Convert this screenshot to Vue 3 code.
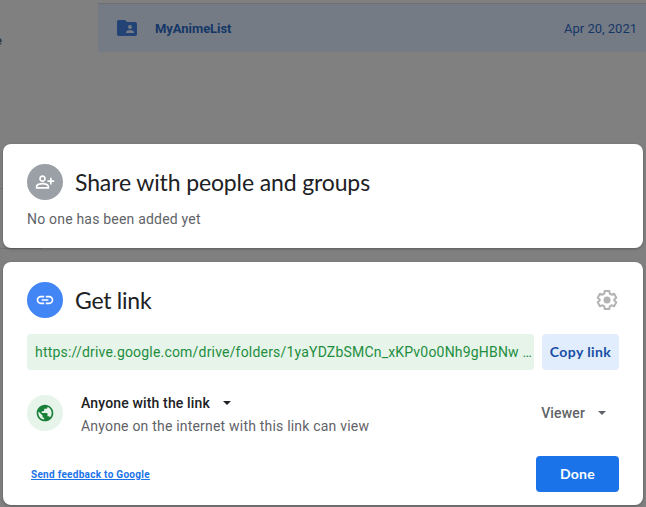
<script setup>
const file = { name: 'MyAnimeList', date: 'Apr 20, 2021' }
const url = 'https://drive.google.com/drive/folders/1yaYDZbSMCn_xKPv0o0Nh9gHBNw …'
</script>

<template>
  <div class="page">
    <header class="behind">
      <aside class="sidebar">e</aside>
      <div class="file-row">
        <svg class="folder" viewBox="0 0 20 16">
          <path fill="#234276" d="M2 0h6l2 2h8a2 2 0 0 1 2 2v10a2 2 0 0 1-2 2H2a2 2 0 0 1-2-2V2a2 2 0 0 1 2-2z" />
          <circle cx="13" cy="7" r="2" fill="#747b85" />
          <path fill="#747b85" d="M9 13v-1c0-1.400 2.600-2.100 4-2.100s4 .7 4 2.100v1z" />
        </svg>
        <span class="file-name">{{ file.name }}</span>
        <span class="file-date">{{ file.date }}</span>
      </div>
    </header>

    <main class="dialogs">
      <section class="card share">
        <div class="heading">
          <span class="disc grey">
            <svg width="20" height="20" viewBox="0 0 24 24" fill="#fff">
              <path d="M9 12c2.210 0 4-1.790 4-4s-1.790-4-4-4-4 1.790-4 4 1.790 4 4 4zm0-6c1.100 0 2 .9 2 2s-.9 2-2 2-2-.9-2-2 .9-2 2-2zm0 7c-2.670 0-8 1.340-8 4v3h16v-3c0-2.660-5.330-4-8-4zm6 5H3v-.99C3.200 16.290 6.300 15 9 15s5.800 1.290 6 2v1zM20 10V7h-2v3h-3v2h3v3h2v-3h3v-2z" />
            </svg>
          </span>
          <h2 class="title-share">Share with people and groups</h2>
        </div>
        <p class="none">No one has been added yet</p>
      </section>

      <section class="card link">
        <div class="heading">
          <span class="disc blue">
            <svg width="20" height="20" viewBox="0 0 24 24" fill="#fff">
              <path d="M3.900 12c0-1.710 1.390-3.100 3.100-3.100h4V7H7c-2.760 0-5 2.240-5 5s2.240 5 5 5h4v-1.900H7c-1.710 0-3.100-1.390-3.100-3.100zM8 13h8v-2H8v2zm9-6h-4v1.900h4c1.710 0 3.100 1.390 3.100 3.100s-1.390 3.100-3.100 3.100h-4V17h4c2.760 0 5-2.240 5-5s-2.240-5-5-5z" />
            </svg>
          </span>
          <h2 class="title-link">Get link</h2>
          <svg class="gear" width="24" height="24" viewBox="0 0 24 24">
            <path fill="none" stroke="#b3b3b3" stroke-width="2" stroke-linejoin="round" d="M9.700 3h4.600l.5 2.700 1.700 1 2.600-.9 2.200 3.900-2 1.700v1.200l2 1.700-2.200 3.900-2.600-.9-1.700 1-.5 2.700H9.700l-.5-2.700-1.700-1-2.600.9-2.200-3.900 2-1.700v-1.200l-2-1.700 2.200-3.900 2.600.9 1.700-1z" />
            <circle cx="12" cy="12" r="3.500" fill="#b3b3b3" />
          </svg>
        </div>

        <div class="link-row">
          <div class="url"><span>{{ url }}</span></div>
          <button class="copy">Copy link</button>
        </div>

        <div class="access">
          <span class="disc green">
            <svg width="20" height="20" viewBox="0 0 24 24" fill="#188038">
              <path d="M12 2C6.480 2 2 6.480 2 12s4.480 10 10 10 10-4.480 10-10S17.520 2 12 2zm-1 17.930c-3.950-.49-7-3.850-7-7.930 0-.62.080-1.210.21-1.790L9 15v1c0 1.100.9 2 2 2v1.930zm6.900-2.540c-.26-.81-1-1.390-1.900-1.390h-1v-3c0-.55-.45-1-1-1H8v-2h2c.55 0 1-.45 1-1V7h2c1.100 0 2-.9 2-2v-.41c2.930 1.190 5 4.060 5 7.410 0 2.080-.8 3.970-2.100 5.390z" />
            </svg>
          </span>
          <div class="audience">
            <div class="who"><span>Anyone with the link</span><i class="caret"></i></div>
            <div class="detail">Anyone on the internet with this link can view</div>
          </div>
          <div class="role"><span>Viewer</span><i class="caret"></i></div>
        </div>

        <footer class="actions">
          <a class="feedback">Send feedback to Google</a>
          <button class="done">Done</button>
        </footer>
      </section>
    </main>
  </div>
</template>

<style>
body {
  background: #808080;
  overflow: hidden;
}
</style>

<style scoped>
.page {
  box-sizing: border-box;
  width: 646px;
  height: 507px;
  overflow: hidden;
  background: linear-gradient(#717171, #717171) 0 188px / 4px 1px no-repeat,
    linear-gradient(#717171, #717171) 0 248px / 42px 1px no-repeat, #808080;
  font-family: Roboto, sans-serif;
  font-size: 14px;
  line-height: 20px;
}
.behind {
  display: flex;
  height: 144px;
}
.sidebar {
  width: 98px;
  padding-top: 31px;
  box-sizing: border-box;
  color: #303133;
  text-indent: -5px;
  font-size: 13px;
  font-weight: 500;
}
.file-row {
  display: flex;
  align-items: center;
  box-sizing: border-box;
  flex: 1;
  height: 49px;
  margin-top: 3px;
  padding: 1px 9px 0 19px;
  border-top: 1px solid #6d6e70;
  background: #747b85;
  color: #153767;
  font-size: 13px;
}
.folder {
  width: 20px;
  height: 16px;
  margin-bottom: 1px;
}
.file-name {
  margin-left: 18px;
  font-weight: 700;
  letter-spacing: -0.05px;
}
.file-date {
  margin-left: auto;
}
.dialogs {
  display: flex;
  flex-direction: column;
  gap: 14px;
  padding: 0 3px;
}
.card {
  box-sizing: border-box;
  padding: 20px 24px 0;
  border-radius: 8px;
  background: #fff;
  box-shadow: 0 1px 3px rgba(0, 0, 0, 0.3);
}
.share {
  height: 104px;
}
.link {
  height: 243px;
}
.heading {
  display: flex;
  align-items: center;
  height: 36px;
}
.disc {
  display: flex;
  align-items: center;
  justify-content: center;
  flex: none;
  width: 36px;
  height: 36px;
  border-radius: 50%;
}
.grey {
  background: #9aa0a6;
}
.blue {
  background: #4285f4;
}
.green {
  background: #e6f4ea;
}
h2 {
  margin: 0 0 0 12px;
  color: #202124;
  font: 400 23px/28px Lato, sans-serif;
  white-space: nowrap;
}
.title-share {
  letter-spacing: -0.13px;
}
.title-link {
  letter-spacing: -0.25px;
}
.gear {
  margin-left: auto;
}
.none {
  margin: 9px 0 0;
  color: #5f6368;
  letter-spacing: 0.2px;
}
.link-row {
  display: flex;
  gap: 8px;
  margin-top: 16px;
}
.url {
  box-sizing: border-box;
  width: 507px;
  height: 36px;
  padding: 8px 0 8px 8px;
  border-radius: 4px;
  background: #e6f4ea;
  color: #1e8e3e;
  letter-spacing: 0.19px;
  white-space: nowrap;
}
button {
  height: 36px;
  padding: 0;
  border: 0;
  border-radius: 4px;
  font: 700 14px/36px Lato, sans-serif;
}
.copy {
  width: 77px;
  background: #e1edfc;
  color: #174ea6;
  letter-spacing: 0.4px;
}
.access {
  display: flex;
  margin-top: 23px;
  height: 44px;
}
.access .disc {
  margin-top: 2px;
}
.audience {
  margin-left: 18px;
}
.who,
.role {
  display: flex;
  align-items: center;
  font-weight: 500;
  letter-spacing: 0.15px;
}
.who {
  color: #202124;
}
.caret {
  margin-left: 13px;
  border: 4.500px solid transparent;
  border-top-color: currentColor;
  border-bottom: 0;
}
.detail {
  margin-top: 3px;
  color: #5f6368;
  letter-spacing: 0.2px;
}
.role {
  height: 20px;
  margin: 10px 13px 0 auto;
  color: #5f6368;
}
.actions {
  display: flex;
  align-items: center;
  justify-content: space-between;
  margin-top: 19px;
  padding-left: 4px;
}
.feedback {
  margin-top: 2px;
  color: #1a73e8;
  font-size: 10px;
  font-weight: 700;
  letter-spacing: 0.28px;
  text-decoration: underline;
}
.done {
  width: 83px;
  background: #1a73e8;
  color: #fff;
  letter-spacing: 0.25px;
}
</style>
